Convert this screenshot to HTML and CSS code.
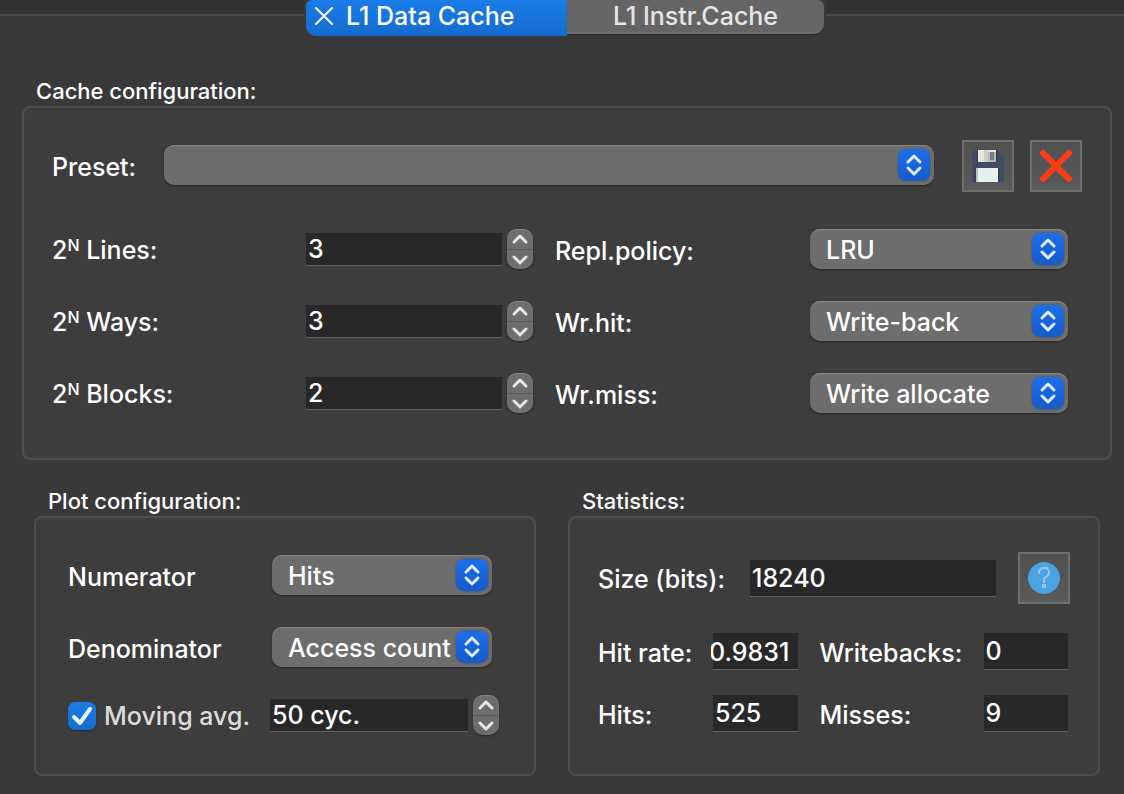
FILE: index.html
```html
<!DOCTYPE html>
<html lang="en">
<head>
<meta charset="utf-8">
<meta name="viewport" content="width=device-width, initial-scale=1">
<title>Cache settings</title>
<link rel="stylesheet" href="styles.css">
</head>
<body>
<svg class="sprite" aria-hidden="true">
  <symbol id="updown" viewBox="0 0 32 32"><path d="M10 13 16 7l6 6M10 19l6 6 6-6"/></symbol>
  <symbol id="up" viewBox="0 0 26 20"><path d="m7 13 6-6 6 6"/></symbol>
  <symbol id="down" viewBox="0 0 26 20"><path d="m7 7 6 6 6-6"/></symbol>
</svg>

<div class="tabbar">
  <div class="tabs" role="tablist">
    <div class="tab tab--active">
      <button class="tab__close" type="button" aria-label="Close tab"><svg viewBox="0 0 18 18"><path d="m1 1 16 16M17 1 1 17"/></svg></button>
      <button class="tab__name" type="button" role="tab" aria-selected="true">L1 Data Cache</button>
    </div>
    <div class="tab">
      <button class="tab__name" type="button" role="tab" aria-selected="false">L1 Instr.Cache</button>
    </div>
  </div>
</div>

<main class="page">
  <section class="group">
    <h2 class="group__title">Cache configuration:</h2>
    <div class="panel panel--cache">
      <div class="preset">
        <label for="preset">Preset:</label>
        <div class="select"><select id="preset"><option></option></select><svg><use href="#updown"/></svg></div>
        <button class="tool" type="button" aria-label="Save preset">
          <svg viewBox="0 0 16 16" shape-rendering="crispEdges">
            <path fill="#424b61" d="M0 0h13v1h1v1h1v1h1v13H0z"/>
            <path fill="#384052" d="M2 0h1v6H2zM12 0h1v6h-1zM1 8h1v8H1zM13 9h1v7h-1z"/>
            <path fill="#e2e6e3" d="M3 0h9v6H3z"/>
            <path fill="#cfcfc9" d="M6 0h2v6H6z"/>
            <path fill="#b7bab8" d="M8 1h4v5H8z"/>
            <path fill="#737c8b" d="M9 1h2v4H9z"/>
            <path fill="#bcc3c9" d="M2 9h1v7H2z"/>
            <path fill="#e8eeee" d="M3 9h10v7H3z"/>
          </svg>
        </button>
        <button class="tool" type="button" aria-label="Delete preset">
          <svg viewBox="0 0 32 32"><path fill="none" stroke="#ff3b12" stroke-width="6" stroke-linecap="round" d="m3 3 26 26M29 3 3 29"/></svg>
        </button>
      </div>

      <div class="params">
        <label for="lines">2<sup>N</sup> Lines:</label>
        <div class="spin"><input id="lines" type="text" value="3"><span class="stepper"><button type="button" aria-label="Increase"><svg><use href="#up"/></svg></button><button type="button" aria-label="Decrease"><svg><use href="#down"/></svg></button></span></div>
        <label class="params__second" for="repl">Repl.policy:</label>
        <div class="select"><select id="repl"><option>LRU</option></select><svg><use href="#updown"/></svg></div>

        <label for="ways">2<sup>N</sup> Ways:</label>
        <div class="spin"><input id="ways" type="text" value="3"><span class="stepper"><button type="button" aria-label="Increase"><svg><use href="#up"/></svg></button><button type="button" aria-label="Decrease"><svg><use href="#down"/></svg></button></span></div>
        <label class="params__second" for="wrhit">Wr.hit:</label>
        <div class="select"><select id="wrhit"><option>Write-back</option></select><svg><use href="#updown"/></svg></div>

        <label for="blocks">2<sup>N</sup> Blocks:</label>
        <div class="spin"><input id="blocks" type="text" value="2"><span class="stepper"><button type="button" aria-label="Increase"><svg><use href="#up"/></svg></button><button type="button" aria-label="Decrease"><svg><use href="#down"/></svg></button></span></div>
        <label class="params__second" for="wrmiss">Wr.miss:</label>
        <div class="select"><select id="wrmiss"><option>Write allocate</option></select><svg><use href="#updown"/></svg></div>
      </div>
    </div>
  </section>

  <div class="lower">
    <section class="group">
      <h2 class="group__title">Plot configuration:</h2>
      <div class="panel panel--plot">
        <div class="plot-row">
          <label for="num">Numerator</label>
          <div class="select"><select id="num"><option>Hits</option></select><svg><use href="#updown"/></svg></div>
        </div>
        <div class="plot-row">
          <label for="den">Denominator</label>
          <div class="select"><select id="den"><option>Access count</option></select><svg><use href="#updown"/></svg></div>
        </div>
        <div class="plot-avg">
          <label class="check"><span class="check__box"><input type="checkbox" checked><svg viewBox="0 0 28 28"><path d="m6 15 6 6L22 7"/></svg></span>Moving avg.</label>
          <div class="spin"><input type="text" value="50 cyc." aria-label="Moving average window"><span class="stepper"><button type="button" aria-label="Increase"><svg><use href="#up"/></svg></button><button type="button" aria-label="Decrease"><svg><use href="#down"/></svg></button></span></div>
        </div>
      </div>
    </section>

    <section class="group">
      <h2 class="group__title">Statistics:</h2>
      <div class="panel panel--stats">
        <div class="size">
          <label for="size">Size (bits):</label>
          <input class="field" id="size" type="text" value="18240" readonly>
          <button class="tool" type="button" aria-label="Help">
            <svg viewBox="0 0 32 32"><circle cx="16" cy="16" r="16" fill="#4aa3df"/><path fill="none" stroke="#92c8ec" stroke-width="2" d="M11 12V9l3-3h5l2 3v3l-5 5v4"/><path fill="#92c8ec" d="M14 22h4v4h-4z"/></svg>
          </button>
        </div>
        <div class="stats">
          <label for="rate">Hit rate:</label>
          <input class="field field--scrolled" id="rate" type="text" value="0.9831" readonly>
          <label class="stats__second" for="wb">Writebacks:</label>
          <input class="field" id="wb" type="text" value="0" readonly>
          <label for="hits">Hits:</label>
          <input class="field" id="hits" type="text" value="525" readonly>
          <label class="stats__second" for="misses">Misses:</label>
          <input class="field" id="misses" type="text" value="9" readonly>
        </div>
      </div>
    </section>
  </div>
</main>
</body>
</html>
```
FILE: styles.css
```css
* { box-sizing: border-box; }

body {
  margin: 0;
  min-height: 100vh;
  background: #393939;
  color: #fff;
  font: 500 25px/32px Inter, "Liberation Sans", sans-serif;
}

button, input, select { font: inherit; color: inherit; margin: 0; border: 0; border-radius: 0; padding: 0; }
button { background: none; }
svg { display: block; fill: none; }
.sprite { position: absolute; width: 0; height: 0; }

/* Tabs */
.tabbar {
  display: flex;
  justify-content: center;
  height: 36px;
  padding-left: 6px;
  background: linear-gradient(#323232 14px, #4c4c4c 14px, #4c4c4c 16px, #393939 16px);
}
.tabs { display: flex; align-items: flex-start; padding: 0 2px; background: #393939; }
.tab {
  display: flex;
  align-items: center;
  justify-content: center;
  width: 257px;
  height: 34px;
  border-bottom: 2px solid #707070;
  border-radius: 0 6px 10px 0;
  background: #656565;
  color: #e6e6e6;
  box-shadow: 0 1px 1px #2c2c2c;
}
.tab--active {
  justify-content: flex-start;
  gap: 13px;
  width: 261px;
  height: 36px;
  padding: 0 0 4px 9px;
  border: 0;
  border-radius: 6px 0 0 10px;
  background: linear-gradient(#1a7ce8, #146bcd);
  color: #fff;
  box-shadow: none;
}
.tab__name { white-space: nowrap; }
.tab__close svg { width: 18px; height: 18px; stroke: #fff; stroke-width: 2; stroke-linecap: round; }

/* Groups */
.page { padding: 40px 12px 18px 22px; }
.group__title { margin: 0; padding-left: 14px; font-size: 22px; font-weight: 500; line-height: 30px; }
.panel { min-height: 260px; border: 2px solid #4e4e4e; border-radius: 8px; background: #3d3d3d; }
.panel label { padding-top: 2px; white-space: nowrap; }
.panel--cache { padding: 32px 28px 45px; }
.lower { display: grid; grid-template-columns: 502fr 532fr; gap: 32px; padding: 26px 12px 0; }

/* Drop-downs */
.select { position: relative; min-width: 0; }
.select select {
  appearance: none;
  display: block;
  width: 100%;
  height: 40px;
  padding: 2px 38px 0 16px;
  border-radius: 10px;
  background: #6d6d6d;
  box-shadow: inset 0 1px 0 #858585, 0 1px 2px #262626;
}
.select svg {
  position: absolute;
  top: 4px;
  right: 4px;
  width: 32px;
  height: 32px;
  border-radius: 8px;
  background: linear-gradient(#1b6eea, #155bcb);
  box-shadow: 0 0 2px #3c4350;
  stroke: #e2ebfb;
  stroke-width: 3;
  stroke-linecap: round;
  stroke-linejoin: round;
  pointer-events: none;
}

/* Text fields */
.field, .spin input {
  min-width: 0;
  width: 100%;
  height: 37px;
  padding: 0 2px;
  border-bottom: 1px solid #616161;
  background: #282828;
}
.field--scrolled {
  width: calc(100% + 2px);
  margin-left: -2px;
  padding: 0;
  border: 0;
  background:
    linear-gradient(#616161, #616161) 2px 100% / 100% 1px no-repeat,
    linear-gradient(#282828, #282828) 2px 0 no-repeat;
  text-indent: -2px;
}
.spin { display: flex; align-items: center; gap: 5px; min-width: 0; }
.spin input { flex: 1; height: 33px; margin-top: 1px; }
.stepper {
  flex: none;
  width: 26px;
  height: 40px;
  overflow: hidden;
  border-radius: 10px;
  background: #6d6d6d;
  box-shadow: inset 0 1px 0 #858585, 0 1px 2px #262626;
}
.stepper button { display: block; width: 26px; height: 20px; }
.stepper button + button { border-top: 1px solid #585858; }
.stepper svg { width: 26px; height: 20px; stroke: #e6e6e6; stroke-width: 3; stroke-linecap: round; stroke-linejoin: round; }

.tool {
  display: grid;
  place-items: center;
  width: 52px;
  height: 52px;
  border: 2px solid #707070;
  background: linear-gradient(#505050, #5a5a5a);
}
.tool svg { width: 32px; height: 32px; }

/* Cache configuration */
.preset {
  display: grid;
  grid-template-columns: 96px minmax(0, 1fr) 52px 52px;
  align-items: center;
  column-gap: 16px;
}
.preset .select { margin: 0 12px 2px 0; }
.params {
  display: grid;
  grid-template-columns: 254px minmax(0, 1fr) 277px 258px;
  align-items: center;
  row-gap: 32px;
  padding: 37px 14px 0 0;
}
.panel .params__second { padding: 4px 0 0 22px; }
sup { font-size: 16px; line-height: 1; vertical-align: 8px; }

/* Plot configuration */
.panel--plot { display: grid; align-content: start; gap: 32px; padding: 37px 35px 0 32px; }
.plot-row { display: grid; grid-template-columns: minmax(0, 1fr) 220px; align-items: center; padding-right: 7px; }
.plot-row label { padding-top: 4px; }
.plot-avg { display: grid; grid-template-columns: minmax(0, 1fr) 229px; align-items: center; margin-top: -4px; }
.check { display: flex; align-items: center; gap: 8px; color: #dcdcdc; }
.check__box { display: grid; flex: none; }
.check__box > * { grid-area: 1 / 1; width: 28px; height: 28px; }
.check input { appearance: none; border-radius: 7px; background: linear-gradient(#1b7ce6, #156bcb); box-shadow: 0 1px 2px #262626; }
.check svg { z-index: 1; stroke: #e8f1fc; stroke-width: 4; stroke-linecap: round; stroke-linejoin: round; pointer-events: none; visibility: hidden; }
.check input:checked + svg { visibility: visible; }

/* Statistics */
.panel--stats { padding: 34px 28px 0; }
.size { display: grid; grid-template-columns: 152px minmax(0, 1fr) 74px; align-items: center; }
.size .tool { justify-self: end; }
.stats {
  display: grid;
  grid-template-columns: 115px minmax(0, 1fr) 186px minmax(0, 1fr);
  align-items: center;
  row-gap: 25px;
  padding: 29px 2px 0 0;
}
.panel .stats__second { padding-left: 22px; }
```
